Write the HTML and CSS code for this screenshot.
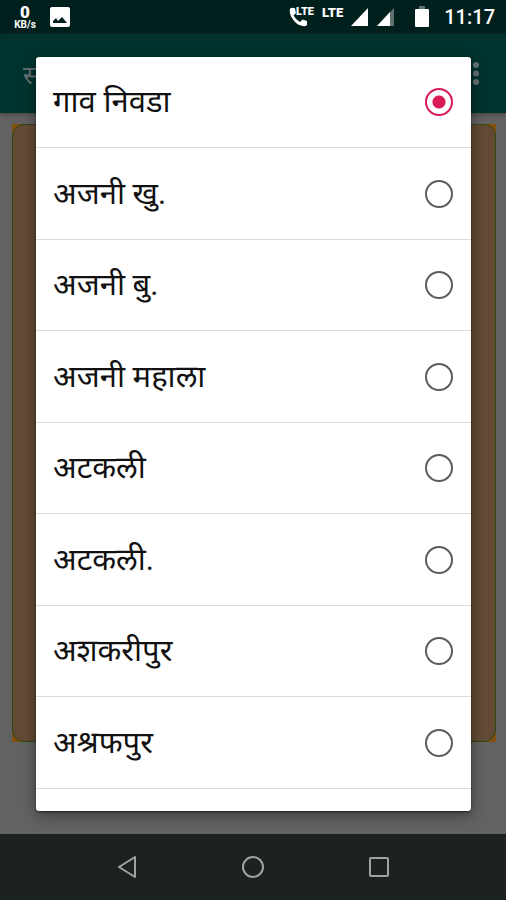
FILE: index.html
```html
<!DOCTYPE html>
<html lang="mr">
<head>
<meta charset="utf-8">
<meta name="viewport" content="width=device-width, initial-scale=1">
<title>गाव निवडा</title>
<link rel="stylesheet" href="styles.css">
</head>
<body>
<header class="status">
  <div class="speed"><b>0</b><span>KB/s</span></div>
  <svg class="photo" width="20" height="20" viewBox="0 0 20 20"><rect width="20" height="20" rx="2" fill="#fff"/><path d="M3 16v-2l3-3 2 3 4-4 5 6z" fill="#00201d"/></svg>
  <div class="signals">
    <div class="call">
      <svg width="19" height="20" viewBox="0 0 19 20"><path d="M1 1.500C3 .500 5 .500 6 1.500L7 6 4.500 8.500Q7 13 11 15L13.500 12.500 18 14V18Q17 19.500 14 19 7 18 3 11 0 6 1 1.500Z" fill="#fff"/></svg>
      <span class="lte small">LTE</span>
    </div>
    <span class="lte">LTE</span>
    <svg class="bars" width="18" height="18" viewBox="0 0 18 18"><path d="M17 0v18H0z" fill="#fff"/></svg>
    <svg class="bars weak" width="18" height="18" viewBox="0 0 18 18"><path d="M17 0v18H0z" fill="#61716f"/><path d="M13 4v14H0z" fill="#fff"/></svg>
    <svg class="battery" width="14" height="22" viewBox="0 0 14 22"><path d="M4 0h6v3H4z" fill="#61716f"/><rect y="3" width="14" height="18" rx="1" fill="#fff"/></svg>
    <time>11:17</time>
  </div>
</header>
<main class="stage">
  <div class="appbar">
    <span>स</span>
    <svg width="6" height="24" viewBox="0 0 6 24" fill="#66716f"><circle cx="3" cy="3" r="3"/><circle cx="3" cy="11.500" r="3"/><circle cx="3" cy="20" r="3"/></svg>
  </div>
  <div class="page"><div class="frame"><div class="card"></div></div></div>
  <div class="overlay">
    <div class="dialog" role="dialog" aria-label="गाव निवडा">
      <label class="row"><span>गाव निवडा</span><input type="radio" name="village" checked></label>
      <label class="row"><span>अजनी खु.</span><input type="radio" name="village"></label>
      <label class="row"><span>अजनी बु.</span><input type="radio" name="village"></label>
      <label class="row"><span>अजनी महाला</span><input type="radio" name="village"></label>
      <label class="row"><span>अटकली</span><input type="radio" name="village"></label>
      <label class="row"><span>अटकली.</span><input type="radio" name="village"></label>
      <label class="row"><span>अशकरीपुर</span><input type="radio" name="village"></label>
      <label class="row"><span>अश्रफपुर</span><input type="radio" name="village"></label>
    </div>
  </div>
</main>
<nav class="nav">
  <button type="button" aria-label="Back"><svg width="24" height="24" viewBox="0 0 24 24"><path d="M20 2v20L4 12z"/></svg></button>
  <button type="button" aria-label="Home"><svg width="24" height="24" viewBox="0 0 24 24"><circle cx="12" cy="12" r="10"/></svg></button>
  <button type="button" aria-label="Recent apps"><svg width="24" height="24" viewBox="0 0 24 24"><rect x="3" y="3" width="18" height="18" rx="1"/></svg></button>
</nav>
</body>
</html>
```
FILE: styles.css
```css
* { box-sizing: border-box; }
body {
  margin: 0;
  min-height: 100vh;
  display: flex;
  flex-direction: column;
  background: #626262;
  font-family: Roboto, "Noto Sans", "Noto Sans Devanagari", sans-serif;
}
.status {
  height: 34px;
  padding: 0 11px 0 13px;
  display: flex;
  align-items: center;
  background: #00201d;
  color: #fff;
}
.speed {
  display: flex;
  flex-direction: column;
  align-items: center;
  width: 24px;
  margin-right: 13px;
  font-weight: 700;
}
.speed b { font-size: 17px; line-height: 16px; }
.speed span { font-size: 10px; line-height: 10px; }
.signals {
  margin-left: auto;
  display: flex;
  align-items: center;
}
.call { display: flex; align-items: flex-start; margin-right: 8px; }
.call svg { margin-right: -12px; }
.lte {
  align-self: flex-start;
  font-size: 13px;
  line-height: 16px;
  font-weight: 900;
}
.lte.small { font-size: 11px; line-height: 10px; }
.bars { margin-left: 8px; }
.weak { margin-left: 8px; }
.battery { margin: 0 15px 0 20px; }
.status time { font-size: 20px; font-weight: 500; }
.stage {
  flex: 1;
  position: relative;
  display: flex;
  flex-direction: column;
}
.appbar {
  height: 79px;
  padding: 0 27px 0 23px;
  display: flex;
  align-items: center;
  justify-content: space-between;
  background: #00332e;
  color: #66716f;
  font-size: 26px;
  box-shadow: 0 2px 4px #4a4a4a;
}
.page {
  flex: 1;
  display: flex;
  padding: 11px 10px 92px 12px;
}
.frame {
  flex: 1;
  display: flex;
  background: #85500c;
}
.card {
  flex: 1;
  border: 1px solid #2f4710;
  border-radius: 12px;
  background: #624a35;
}
.overlay {
  position: absolute;
  inset: 0;
  display: flex;
  padding: 23px 35px 23px 36px;
}
.dialog {
  flex: 1;
  border-radius: 3px;
  background: #fff;
  box-shadow: 0 4px 14px #0006, 0 1px 2px #0008;
}
.row {
  height: 91px;
  padding: 0 18px 0 17px;
  display: flex;
  align-items: center;
  justify-content: space-between;
  border-bottom: 1px solid #dcdcdc;
  color: #111;
  font-size: 31px;
  line-height: 40px;
}
.row:nth-child(even) { height: 92px; }
.row input {
  appearance: none;
  width: 28px;
  height: 28px;
  margin: 0;
  border: 2px solid #5c5c5c;
  border-radius: 50%;
}
.row input:checked {
  border-color: #d81b55;
  background: radial-gradient(circle, #d81b55 6px, #fff 7px);
}
.nav {
  height: 66px;
  padding: 0 64px;
  display: flex;
  align-items: center;
  background: #1c2222;
}
.nav button {
  flex: 1;
  display: flex;
  justify-content: center;
  padding: 0;
  border: 0;
  background: none;
}
.nav svg {
  fill: none;
  stroke: #a0a3a3;
  stroke-width: 2;
  stroke-linejoin: round;
}
```
